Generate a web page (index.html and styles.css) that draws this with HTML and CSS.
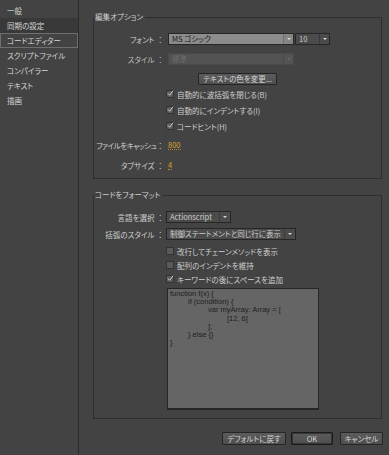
FILE: index.html
```html
<!DOCTYPE html>
<html lang="ja">
<head>
    <meta charset="UTF-8">
    <title>環境設定</title>
    <link rel="stylesheet" href="styles.css">
</head>
<body>
<div class="window">

    <!-- Category list -->
    <ul class="sidebar">
        <li>一般</li>
        <li class="hover">同期の設定</li>
        <li class="selected">コードエディター</li>
        <li>スクリプトファイル</li>
        <li>コンパイラー</li>
        <li>テキスト</li>
        <li>描画</li>
    </ul>

    <div class="main">

        <!-- Edit options -->
        <fieldset class="group group-edit">
            <legend>編集オプション</legend>

            <div class="row row-font">
                <span class="label">フォント<span class="colon">：</span></span>
                <div class="combo combo-font"><span class="value">MS ゴシック</span><span class="arrow"></span></div>
                <div class="combo combo-size"><span class="value">10</span><span class="arrow"></span></div>
            </div>

            <div class="row row-style">
                <span class="label disabled">スタイル<span class="colon">：</span></span>
                <div class="combo combo-style disabled"><span class="value">標準</span><span class="arrow"></span></div>
            </div>

            <div class="row row-button">
                <button class="btn btn-color">テキストの色を変更...</button>
            </div>

            <div class="check check-edit"><span class="box checked"><svg viewBox="0 0 8 8"><polyline points="1,3.8 3,6 7,0.8"/></svg></span>自動的に波括弧を閉じる(B)</div>
            <div class="check check-edit"><span class="box checked"><svg viewBox="0 0 8 8"><polyline points="1,3.8 3,6 7,0.8"/></svg></span>自動的にインデントする(I)</div>
            <div class="check check-edit"><span class="box checked"><svg viewBox="0 0 8 8"><polyline points="1,3.8 3,6 7,0.8"/></svg></span>コードヒント(H)</div>

            <div class="row row-value row-cache">
                <span class="label label-tight">ファイルをキャッシュ<span class="colon">：</span></span>
                <span class="num">800</span>
            </div>
            <div class="row row-value">
                <span class="label">タブサイズ<span class="colon">：</span></span>
                <span class="num">4</span>
            </div>
        </fieldset>

        <!-- Code format -->
        <fieldset class="group group-format">
            <legend>コードをフォーマット</legend>

            <div class="row row-lang">
                <span class="label">言語を選択<span class="colon">：</span></span>
                <div class="combo combo-lang"><span class="value">Actionscript</span><span class="arrow"></span></div>
            </div>

            <div class="row row-brace">
                <span class="label">括弧のスタイル<span class="colon">：</span></span>
                <div class="combo combo-brace"><span class="value">制御ステートメントと同じ行に表示</span><span class="arrow"></span></div>
            </div>

            <div class="check check-format first"><span class="box"></span>改行してチェーンメソッドを表示</div>
            <div class="check check-format"><span class="box"></span>配列のインデントを維持</div>
            <div class="check check-format"><span class="box checked"><svg viewBox="0 0 8 8"><polyline points="1,3.8 3,6 7,0.8"/></svg></span>キーワードの後にスペースを追加</div>

            <div class="code-preview">
                <div>function f(x) {</div>
                <div class="i1">if (condition) {</div>
                <div class="i2">var myArray: Array = [</div>
                <div class="i3">[12, 6]</div>
                <div class="i2">];</div>
                <div class="i1">} else {}</div>
                <div>}</div>
            </div>
        </fieldset>

        <div class="actions">
            <button class="btn btn-default">デフォルトに戻す</button>
            <button class="btn btn-ok">OK</button>
            <button class="btn btn-cancel">キャンセル</button>
        </div>
    </div>
</div>
</body>
</html>
```

FILE: styles.css
```css
* {
    box-sizing: border-box;
}

body {
    margin: 0;
    background: #434343;
    font-family: "Noto Sans CJK JP", sans-serif;
    font-size: 7.5px;
    font-feature-settings: "palt";
    color: #cfcfcf;
}

.window {
    display: flex;
    width: 389px;
    height: 455px;
}

/* Category list */
.sidebar {
    width: 79px;
    margin: 0;
    padding: 3px 0 0;
    list-style: none;
    border-right: 1px solid #2b2b2b;
    flex-shrink: 0;
}

.sidebar li {
    height: 15px;
    line-height: 15px;
    padding-left: 7px;
    color: #d6d6d6;
}

.sidebar .hover {
    background: #393939;
}

.sidebar .selected {
    border: 1px solid #6e6e6e;
    line-height: 13px;
    padding-left: 6px;
}

.main {
    flex: 1;
    display: flex;
    flex-direction: column;
    padding: 12px 7px 0 14px;
}

/* Group boxes */
.group {
    margin: 0;
    padding: 0 0 3px;
    min-width: 0;
    border: 1px solid #2e2e2e;
}

.group legend {
    padding: 0 2px 0 1px;
    line-height: 10px;
}

.group-format {
    margin-top: 11px;
    padding-bottom: 8px;
}

.row {
    display: flex;
    align-items: center;
    height: 12px;
}

.label {
    display: flex;
    justify-content: flex-end;
    width: 72px;
    padding-right: 2px;
    flex-shrink: 0;
    white-space: nowrap;
}

.label .colon {
    margin-left: 2px;
    font-feature-settings: normal;
}

.label-tight {
    letter-spacing: -0.5px;
}

.label-tight .colon {
    margin-left: 0;
    letter-spacing: 0;
}

.row-font { margin-top: 11px; }
.row-style { margin-top: 8px; }
.row-button { margin-top: 8px; }

.row-value { height: 20px; }
.row-cache { margin-top: 1px; }

.row-lang { margin-top: 11px; }
.row-brace { margin-top: 5px; }

/* Combo boxes */
.combo {
    display: flex;
    height: 12px;
    border: 1px solid #262626;
    background: #4b4b4b;
    color: #cccccc;
}

.combo .value {
    flex: 1;
    padding-left: 3px;
    line-height: 10px;
    white-space: nowrap;
    overflow: hidden;
}

.combo .arrow {
    position: relative;
    width: 10px;
    border-left: 1px solid #3a3a3a;
}

.combo .arrow::after {
    content: "";
    position: absolute;
    left: 3px;
    top: 4px;
    border-left: 2px solid transparent;
    border-right: 2px solid transparent;
    border-top: 2px solid #d8d8d8;
}

.combo-font {
    width: 126px;
    margin-left: 2px;
    background: #8c8c8c;
    color: #1a1a1a;
}

.combo-font .arrow {
    border-left-color: #6f6f6f;
    background: #858585;
}

.combo-size {
    width: 35px;
    margin-left: 1px;
}

.combo-style {
    width: 126px;
    margin-left: 2px;
}

.combo.disabled {
    background: #535353;
    border-color: #4a4a4a;
    color: #6e6e6e;
}

.combo.disabled .arrow {
    border-left-color: #4a4a4a;
}

.combo.disabled .arrow::after {
    border-top-color: #6a6a6a;
}

.label.disabled {
    color: #bdbdbd;
}

.combo-lang {
    width: 65px;
}

.combo-lang .arrow {
    width: 11px;
}

.combo-brace {
    width: 130px;
}

.combo-brace .arrow {
    width: 11px;
}

/* Buttons */
.btn {
    height: 13px;
    padding: 0;
    border: 1px solid #252525;
    border-radius: 1px;
    background: linear-gradient(#5b5b5b, #4f4f4f);
    color: #d4d4d4;
    font-family: "Noto Sans CJK JP", sans-serif;
    font-size: 7.5px;
    font-feature-settings: "palt";
    line-height: 11px;
}

.btn-color {
    width: 79px;
    height: 12px;
    line-height: 10px;
    margin-left: 104px;
}

/* Check boxes */
.check {
    display: flex;
    align-items: center;
    height: 16px;
    padding-left: 72px;
    white-space: nowrap;
}

.row-button + .check {
    margin-top: 1px;
}

.check-format {
    height: 14px;
}

.check-format.first {
    margin-top: 4px;
}

.box {
    width: 8px;
    height: 8px;
    margin-right: 3px;
    border: 1px solid #333333;
    background: #5a5a5a;
    flex-shrink: 0;
}

.box svg {
    display: block;
    width: 7px;
    height: 7px;
    margin: -1px 0 0 0;
    overflow: visible;
}

.box polyline {
    fill: none;
    stroke: #dedede;
    stroke-width: 1;
}

/* Orange numeric fields */
.num {
    color: #dca12e;
    border-bottom: 1px dotted #b9852a;
    line-height: 9px;
    margin-left: 2px;
}

/* Code preview */
.code-preview {
    width: 152px;
    height: 122px;
    margin: 2px 0 0 73px;
    padding: 1px 0 0 2px;
    background: #656565;
    border: 1px solid #262626;
    border-bottom-width: 2px;
    color: #1f1f1f;
    font-family: "Liberation Sans", sans-serif;
    font-size: 7.5px;
    line-height: 8.2px;
    white-space: nowrap;
}

.code-preview .i1 { padding-left: 18px; }
.code-preview .i2 { padding-left: 38px; }
.code-preview .i3 { padding-left: 57px; }

/* Dialog buttons */
.actions {
    display: flex;
    justify-content: flex-end;
    margin: 13px -1px 0 0;
}

.btn-default {
    width: 64px;
}

.btn-ok {
    width: 42px;
    margin-left: 5px;
    border-color: #1c1c1c;
    box-shadow: inset 0 0 0 1px #353535;
}

.btn-cancel {
    width: 43px;
    margin-left: 7px;
}
```
